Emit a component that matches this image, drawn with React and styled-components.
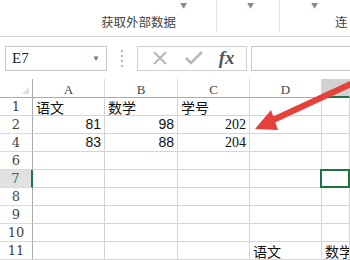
import React from "react";
import styled, { createGlobalStyle } from "styled-components";

const Global = createGlobalStyle`
  html, body { margin: 0; padding: 0; background: #fff; }
  * { box-sizing: border-box; }
`;

const Page = styled.div`
  position: relative;
  width: 350px;
  height: 260px;
  overflow: hidden;
  background: #fff;
  font-family: "Noto Sans CJK SC", sans-serif;
  display: flex;
  flex-direction: column;
`;

const Ribbon = styled.div`
  height: 37px;
  flex: none;
  display: flex;
  border-bottom: 1px solid #d4d4d4;
  background: #fff;
`;

const Group = styled.div`
  width: ${(p) => p.$w}px;
  flex: none;
  position: relative;
  border-right: ${(p) => (p.$sep ? "1px solid #e1e1e1" : "none")};
  height: 32px;
  display: flex;
  align-items: flex-end;
  justify-content: flex-start;
  padding: 0 0 2px ${(p) => p.$pad || 0}px;
`;

const GroupLabel = styled.span`
  font-size: 12.5px;
  color: #444;
  line-height: 16px;
`;

const TinyArrow = styled.span`
  position: absolute;
  top: 0px;
  left: ${(p) => p.$x}px;
  font-size: 7px;
  color: #888;
  line-height: 10px;
`;

const FormulaBar = styled.div`
  height: 42px;
  flex: none;
  display: flex;
  align-items: center;
  padding: 0 0 0 5px;
`;

const NameBox = styled.div`
  width: 102px;
  height: 25px;
  border: 1px solid #c6c6c6;
  display: flex;
  align-items: center;
  justify-content: space-between;
  padding: 0 6px 0 6px;
  font-family: "Liberation Serif", serif;
  font-size: 15px;
  color: #222;
`;

const DropArrow = styled.span`
  font-size: 8px;
  color: #777;
`;

const Dots = styled.div`
  width: 30px;
  display: flex;
  flex-direction: column;
  align-items: center;
  gap: 3px;
  span {
    width: 2px;
    height: 2px;
    background: #b5b5b5;
  }
`;

const FxBox = styled.div`
  width: 110px;
  height: 25px;
  border: 1px solid #d0d0d0;
  display: flex;
  align-items: center;
  justify-content: space-around;
  padding: 0 4px 0 6px;
`;

const Fx = styled.span`
  font-family: "Liberation Serif", serif;
  font-style: italic;
  font-size: 19px;
  color: #555;
  font-weight: bold;
  line-height: 20px;
`;

const FormulaInput = styled.div`
  flex: 1;
  height: 25px;
  margin-left: 4px;
  border: 1px solid #c6c6c6;
  border-right: none;
`;

const Sheet = styled.div`
  flex: 1;
  display: grid;
  grid-template-columns: 33px 72px 73px 72px 72px 1fr;
  grid-template-rows: 19px repeat(9, 18px);
`;

const Cell = styled.div`
  border-right: 1px solid #d4d4d4;
  border-bottom: 1px solid #d4d4d4;
  font-size: 14px;
  line-height: 17px;
  color: #111;
  white-space: nowrap;
  overflow: hidden;
  padding: 0 3px;
  text-align: ${(p) => p.$align || "left"};
  font-family: ${(p) =>
    p.$serif ? '"Liberation Serif", serif' : '"Liberation Sans", "Noto Sans CJK SC", sans-serif'};
  ${(p) => p.$cjk && `font-family: "Noto Sans CJK SC", sans-serif; line-height: 18px;`}
`;

const ColHead = styled(Cell)`
  text-align: center;
  font-family: "Liberation Serif", serif;
  font-size: 13px;
  color: #444;
  line-height: 22px;
  border-right-color: #dadada;
  border-bottom: 1px solid #ababab;
  background: ${(p) => (p.$sel ? "#d2d2d2" : "#fff")};
  ${(p) => p.$sel && "border-bottom: 2px solid #217346;"}
`;

const RowHead = styled(Cell)`
  text-align: center;
  font-family: "DejaVu Serif", serif;
  font-size: 13px;
  color: #444;
  line-height: 18px;
  padding: 0;
  border-right: 1px solid #ababab;
  border-bottom-color: #dadada;
  background: ${(p) => (p.$sel ? "#e1e1e1" : "#fff")};
  ${(p) => p.$sel && "border-right: 2px solid #217346; color: #217346;"}
`;

const Corner = styled(Cell)`
  position: relative;
  border-right: 1px solid #ababab;
  border-bottom: 1px solid #ababab;
  &::after {
    content: "";
    position: absolute;
    right: 3px;
    bottom: 3px;
    border-left: 7px solid transparent;
    border-bottom: 7px solid #dfdfdf;
  }
`;

const ActiveCell = styled(Cell)`
  border: 2px solid #217346;
  margin: -1px 0 0 -2px;
`;

const Arrow = styled.svg`
  position: absolute;
  left: 0;
  top: 0;
  pointer-events: none;
`;

const rows = [
  { n: "1", cells: [{ t: "语文", cjk: true }, { t: "数学", cjk: true }, { t: "学号", cjk: true }, {}, {}] },
  { n: "2", cells: [{ t: "81", a: "right" }, { t: "98", a: "right" }, { t: "202", a: "right", serif: true }, {}, {}] },
  { n: "4", cells: [{ t: "83", a: "right" }, { t: "88", a: "right" }, { t: "204", a: "right", serif: true }, {}, {}] },
  { n: "6", cells: [{}, {}, {}, {}, {}] },
  { n: "7", sel: true, cells: [{}, {}, {}, {}, { active: true }] },
  { n: "8", cells: [{}, {}, {}, {}, {}] },
  { n: "9", cells: [{}, {}, {}, {}, {}] },
  { n: "10", cells: [{}, {}, {}, {}, {}] },
  { n: "11", cells: [{}, {}, {}, { t: "语文", cjk: true }, { t: "数学", cjk: true }] },
];

export default function App() {
  return (
    <Page>
      <Global />
      <Ribbon>
        <Group $w={217} $sep $pad={101}>
          <TinyArrow $x={180}>▼</TinyArrow>
          <GroupLabel>获取外部数据</GroupLabel>
        </Group>
        <Group $w={63} $sep>
          <TinyArrow $x={30}>▼</TinyArrow>
        </Group>
        <Group $w={70} $pad={55}>
          <TinyArrow $x={31}>▼</TinyArrow>
          <GroupLabel>连</GroupLabel>
        </Group>
      </Ribbon>
      <FormulaBar>
        <NameBox>
          E7
          <DropArrow>▼</DropArrow>
        </NameBox>
        <Dots>
          <span />
          <span />
          <span />
          <span />
        </Dots>
        <FxBox>
          <svg width="18" height="18" viewBox="0 0 18 18">
            <path d="M3 3 L15 15 M15 3 L3 15" stroke="#b8b8b8" strokeWidth="2.2" />
          </svg>
          <svg width="20" height="18" viewBox="0 0 20 18">
            <path d="M2 9 L7 14 L18 3" stroke="#b8b8b8" strokeWidth="2.6" fill="none" />
          </svg>
          <Fx>fx</Fx>
        </FxBox>
        <FormulaInput />
      </FormulaBar>
      <Sheet>
        <Corner />
        <ColHead>A</ColHead>
        <ColHead>B</ColHead>
        <ColHead>C</ColHead>
        <ColHead>D</ColHead>
        <ColHead $sel />
        {rows.map((r) => (
          <React.Fragment key={r.n}>
            <RowHead $sel={r.sel}>{r.n}</RowHead>
            {r.cells.map((c, i) =>
              c.active ? (
                <ActiveCell key={i} />
              ) : (
                <Cell key={i} $align={c.a} $serif={c.serif} $cjk={c.cjk}>
                  {c.t}
                </Cell>
              )
            )}
          </React.Fragment>
        ))}
      </Sheet>
      <Arrow width="350" height="260" viewBox="0 0 350 260">
        <path d="M352 80 L354 86 L274 123 L272 117 Z" fill="#e5403a" />
        <path d="M255 129 L271 110 L278 130 Z" fill="#e5403a" />
      </Arrow>
    </Page>
  );
}
